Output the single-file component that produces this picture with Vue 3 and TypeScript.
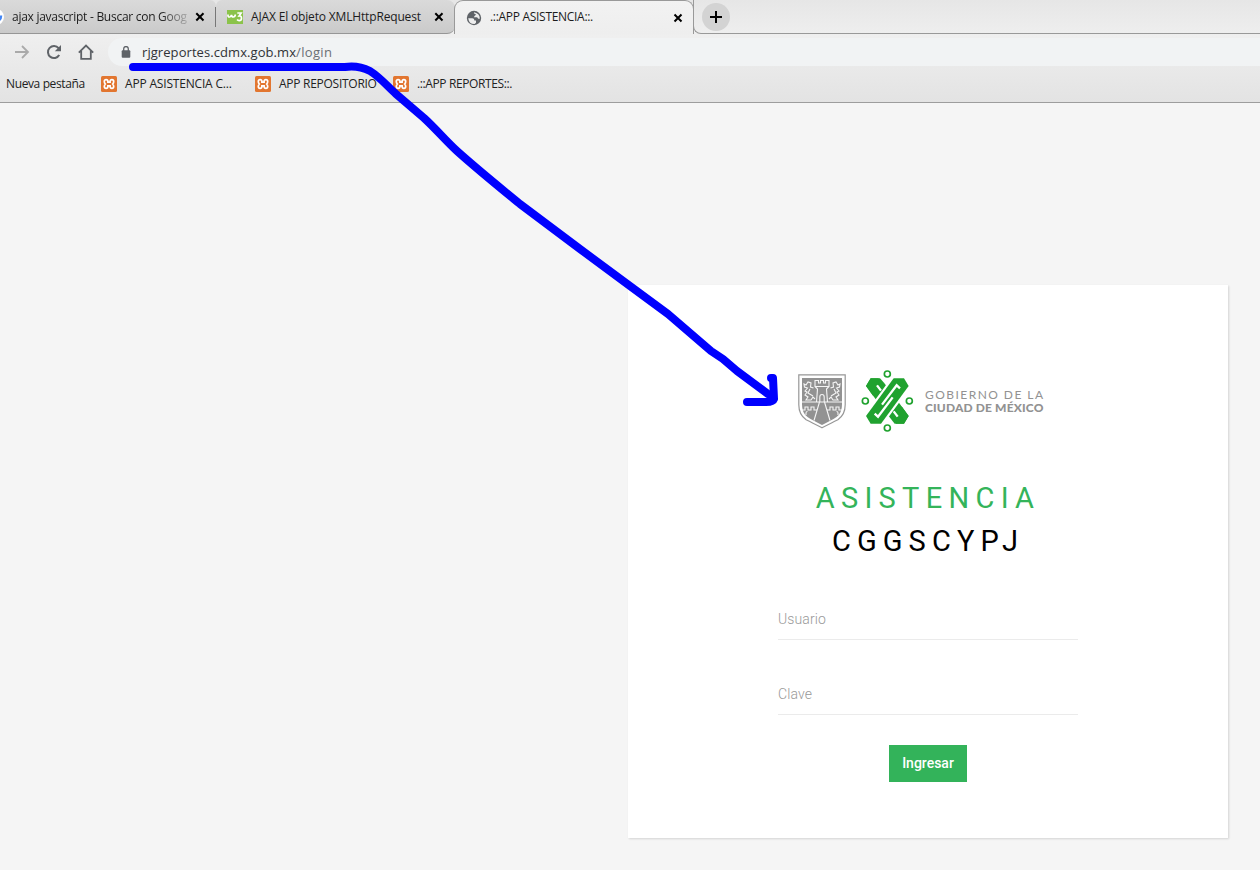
<script setup lang="ts">
interface Bookmark {
  label: string
  icon: boolean
  cls: string
}

const bookmarks: Bookmark[] = [
  { label: 'Nueva pestaña', icon: false, cls: 'bm-new' },
  { label: 'APP ASISTENCIA C...', icon: true, cls: 'bm-asis' },
  { label: 'APP REPOSITORIO', icon: true, cls: 'bm-repo' },
  { label: '.::APP REPORTES::.', icon: true, cls: 'bm-repr' },
]
</script>

<template>
  <div class="screen">
    <header class="browser">
      <div class="tabs">
        <div class="tab tab-first">
          <svg class="google" width="4" height="16" viewBox="0 0 4 16"><circle cx="-4" cy="8" r="8" fill="#fff" /><path d="M0 6.500h2.300a7 7 0 0 1-2.300 5.500z" fill="#4285f4" /></svg>
          <span class="title t1">ajax javascript - Buscar con Goog</span>
          <svg class="close" width="10" height="10" viewBox="0 0 10 10"><path d="M1.300 1.300l7.200 7.200M8.500 1.300L1.300 8.500" /></svg>
        </div>
        <div class="tab tab-second">
          <svg class="fav" width="16" height="16" viewBox="0 0 16 16">
            <rect y="1" width="16" height="14" fill="#8bc34a" />
            <path d="M1 5.500v1q0 2 2 1.300 1.300-.5 1.500-2 .2 2.200 1.800 2.200 1.800 0 2-2.500M10.300 4h3.800l-2 3q2.400-.2 2.400 2.200 0 2.400-2.400 2.400-1.300 0-2-1" fill="none" stroke="#fff" stroke-width="1.700" />
          </svg>
          <span class="title t2">AJAX El objeto XMLHttpRequest</span>
          <svg class="close" width="10" height="10" viewBox="0 0 10 10"><path d="M1.300 1.300l7.200 7.200M8.500 1.300L1.300 8.500" /></svg>
        </div>
        <div class="tab tab-active">
          <svg class="fav" width="16" height="16" viewBox="0 0 16 16">
            <circle cx="8" cy="8" r="7.200" fill="#5f6368" />
            <path d="M2.200 8.200h4.100q2 0 2 1.800v.6h1.700v2.200l-1.400 1.300q-5.500.2-6.400-5.900zM8.200 2.200q-1 1.600.8 1.600l1 .9-1.500 1.200-.6 1.400h3.200l1.200 1.500h1.500Q14 3.500 8.200 2.200z" fill="#eee" />
          </svg>
          <span class="title t3">.::APP ASISTENCIA::.</span>
          <svg class="close" width="10" height="10" viewBox="0 0 10 10"><path d="M1.500 1.500l7 7M8.500 1.500l-7 7" /></svg>
        </div>
        <div class="strip-end">
          <div class="plus">
            <svg width="12" height="12" viewBox="0 0 12 12"><path d="M6 0v12M0 6h12" stroke="#000" stroke-width="2" /></svg>
          </div>
        </div>
      </div>
      <div class="toolbar">
        <svg class="nav forward" width="16" height="16" viewBox="0 0 16 16"><path d="M1 8h13M8 2l6 6-6 6" fill="none" stroke="#aaa" stroke-width="1.800" /></svg>
        <svg class="nav reload" width="16" height="16" viewBox="0 0 16 16"><path d="M13.200 11A6 6 0 1 1 12.600 4.200L14 5.800" fill="none" stroke="#5f6368" stroke-width="2" /><path d="M15 1v6.200H8.800z" fill="#5f6368" /></svg>
        <svg class="nav home" width="16" height="16" viewBox="0 0 16 16"><path d="M.8 8.600L8 1.500l7.200 7.100M3.200 7v7.800h9.600V7" fill="none" stroke="#5f6368" stroke-width="1.800" /></svg>
        <div class="address">
          <svg width="10" height="12" viewBox="0 0 10 12"><rect x=".7" y="4.300" width="8.600" height="7.500" rx="1" fill="#5f6368" /><path d="M2.700 5V2.800a2.300 2.300 0 0 1 4.600 0V5" fill="none" stroke="#5f6368" stroke-width="1.300" /></svg>
          <span class="url">rjgreportes.cdmx.gob.mx<i>/login</i></span>
        </div>
      </div>
      <nav class="bookmarks">
        <div v-for="b in bookmarks" :key="b.label" class="bookmark" :class="b.cls">
          <svg v-if="b.icon" width="16" height="16" viewBox="0 0 16 16">
            <rect width="16" height="16" rx="1.500" fill="#e27630" />
            <path d="M8 6.200H6.900V5.400Q6.900 3.700 5.100 3.700T3.300 5.400Q3.300 7 4.300 8 3.300 9 3.300 10.600 3.300 12.300 5.100 12.300T6.900 10.600V9.800H9.100V10.600Q9.100 12.300 10.900 12.300T12.700 10.600Q12.700 9 11.700 8 12.700 7 12.700 5.400 12.700 3.700 10.900 3.700T9.100 5.400V6.200z" fill="none" stroke="#fff" stroke-width="1.700" />
          </svg>
          <span>{{ b.label }}</span>
        </div>
      </nav>
    </header>

    <main class="page">
      <section class="card">
        <div class="brand">
          <svg class="shield" width="48" height="55" viewBox="0 0 48 55">
            <path d="M.8.8h46.400v30q0 10-7.300 14.900Q34 48.500 24 53.800 14 48.500 8.100 45.700.8 40.800.8 30.800z" fill="#fff" stroke="#979797" stroke-width="1.200" />
            <path d="M4 4h40v26.500q0 8.500-5.500 12.500Q34 46 24 51 14 46 9.500 43 4 39 4 30.500z" fill="#929292" />
            <g fill="none" stroke="#f5f5f5" stroke-width="1.100">
              <path d="M4 28h40M18.500 28l1-13-2.500-2.500V6.500h3.500V9h2V6.500h3V9h2V6.500H31v6L28.500 15l1 13M17 12.500h14M21.800 28v-5q0-2.500 2.200-2.500t2.200 2.500v5M21.500 28L16 46.500M26.500 28L32 46.500" />
              <path d="M4 36h3v-3h3v3h3v-3h3v3h3M8 41v-2q0-1.500 1.500-1.500M44 36h-3v-3h-3v3h-3v-3h-3v3h-3M40 41v-2q0-1.500-1.500-1.500" />
              <path d="M15.500 14l-3-1 .5-4-3-1-2 3-2-1 .5 3 3 1-2.500 3 2 1-2 3 3 2-2 3h5l2-3 2 2M12 15l-2 4 5 3M32.500 14l3-1-.5-4 3-1 2 3 2-1-.5 3-3 1 2.500 3-2 1 2 3-3 2 2 3h-5l-2-3-2 2M36 15l2 4-5 3" />
            </g>
          </svg>
          <svg class="emblem" width="60" height="70" viewBox="0 0 180 210">
            <g fill="none" stroke="#20a22f" stroke-width="5">
              <circle cx="88" cy="24" r="9" />
              <circle cx="88" cy="186" r="9" />
              <circle cx="22" cy="105" r="9" />
              <circle cx="154" cy="105" r="9" />
            </g>
            <path d="M66 37H38L24 60 57 105 110 173H138L152 150 119 105 78 50z" fill="#20a22f" />
            <path d="M107 37H138L152 60 119 105 69 173H38L24 150 57 105z" fill="#20a22f" stroke="#fff" stroke-width="13" stroke-linejoin="round" />
            <path d="M107 37H138L152 60 119 105 69 173H38L24 150 57 105z" fill="#20a22f" />
            <path d="M62 37H38L24 60 45 89 61 66zM114 173H138L152 150 131 121 115 144z" fill="#20a22f" />
            <g fill="none" stroke="#fff" stroke-width="7">
              <path d="M69 74L57 58M107 136L119 152" />
              <path d="M126 67L116 58 72 116M50 143L60 152 104 94" />
            </g>
          </svg>
          <div class="wordmark">
            <span class="gov">GOBIERNO DE LA</span>
            <span class="city">CIUDAD DE MÉXICO</span>
          </div>
        </div>
        <h1><span class="green">ASISTENCIA</span><span class="black">CGGSCYPJ</span></h1>
        <form @submit.prevent>
          <input type="text" placeholder="Usuario" />
          <input type="password" placeholder="Clave" />
          <button type="submit">Ingresar</button>
        </form>
      </section>
    </main>

    <svg class="ink" width="1260" height="870" viewBox="0 0 1260 870">
      <path d="M133 67H345Q358 65 370 71C381 78 387 86 396 94L424 118C436 129 446 141 457 151C477 169 498 186 520 204L580 249 630 286 668 314 711 351 723 359 737 371 768 394" />
      <path d="M771 378H773L774 399Q773 402 766 402L747 402" />
    </svg>
  </div>
</template>

<style>
body {
  margin: 0;
  overflow: hidden;
}
</style>

<style scoped>
.screen {
  position: relative;
  width: 1260px;
  height: 870px;
  overflow: hidden;
  display: flex;
  flex-direction: column;
  background: #f5f5f5;
  font-family: "Open Sans", "Noto Sans", sans-serif;
}

.browser {
  box-sizing: border-box;
  height: 103px;
  border-bottom: 1px solid #9d9d9d;
  background: linear-gradient(#e6e6e6, #efefef 36px, #e3e3e3);
}

.tabs {
  display: flex;
  height: 34px;
}

.tab {
  box-sizing: border-box;
  display: flex;
  align-items: center;
  height: 34px;
  font-size: 12px;
  color: #1c1c1c;
  white-space: nowrap;
}

.tab-first,
.tab-second {
  background: linear-gradient(#dadada, #cacaca);
  border-bottom: 1px solid #969696;
}

.tab-first {
  width: 216px;
  border-radius: 0 6px 0 0;
}

.tab-first::after {
  content: "";
  margin-left: 10px;
  width: 1px;
  height: 20px;
  background: #777;
}

.tab-second {
  width: 239px;
  padding-left: 11px;
  border-radius: 6px 8px 8px 0;
}

.tab-active {
  width: 240px;
  margin-left: -1px;
  padding-left: 11px;
  border: 1px solid #999;
  border-bottom: 0;
  border-radius: 9px 9px 0 0;
  background: linear-gradient(#f2f2f2, #eee);
}

.strip-end {
  flex: 1;
  box-sizing: border-box;
  margin-left: -1px;
  padding: 3px 0 0 8px;
  border-bottom: 1px solid #999;
  border-left: 1px solid #999;
  border-radius: 0 0 0 8px;
}

.plus {
  display: flex;
  align-items: center;
  justify-content: center;
  width: 28px;
  height: 28px;
  border-radius: 50%;
  background: #d3d3d3;
}

.t1 {
  width: 179px;
  margin-left: 8px;
  letter-spacing: -0.27px;
  mask-image: linear-gradient(to right, #000 148px, transparent 182px);
}

.t2 {
  width: 174px;
  margin-left: 8px;
  letter-spacing: -0.16px;
}

.t3 {
  width: 175px;
  margin-left: 8px;
  letter-spacing: -0.3px;
}

.tab-active .title {
  margin-top: -2px;
}

.close {
  margin-left: 9px;
  fill: none;
  stroke: #000;
  stroke-width: 2;
}

.tab-first .close {
  margin-left: 4px;
}

.tab-active .close {
  margin-left: 8px;
}

.toolbar {
  display: flex;
  height: 32px;
  padding-left: 14px;
}

.nav {
  margin: 10px 16px 0 0;
}

.address {
  flex: 1;
  display: flex;
  align-items: center;
  box-sizing: border-box;
  height: 28px;
  margin: 4px 0 0 -2px;
  padding-left: 13px;
  border-radius: 14px 0 0 14px;
  background: #f1f3f4;
}

.url {
  margin-left: 11px;
  font-size: 13px;
  letter-spacing: 0.07px;
  color: #303236;
}

.url i {
  font-style: normal;
  letter-spacing: 0.35px;
  color: #6b6f74;
}

.bookmarks {
  display: flex;
  align-items: center;
  height: 36px;
  padding-left: 6px;
  font-size: 12px;
  color: #222;
}

.bookmark {
  display: flex;
  align-items: center;
  gap: 8px;
  white-space: nowrap;
}

.bookmark span {
  margin-top: -1px;
}

.bm-new {
  width: 95px;
  letter-spacing: -0.38px;
}

.bm-asis {
  width: 154px;
  letter-spacing: -0.18px;
}

.bm-repo {
  width: 138px;
  letter-spacing: -0.27px;
}

.bm-repr {
  letter-spacing: -0.38px;
}

.page {
  flex: 1;
  padding: 182px 0 0 628px;
}

.card {
  box-sizing: border-box;
  width: 600px;
  height: 553px;
  padding: 84px 150px 0;
  background: #fff;
  box-shadow: 1px 1px 2px rgba(0, 0, 0, 0.14);
  font-family: Roboto, "Open Sans", sans-serif;
}

.brand {
  display: flex;
  align-items: center;
  height: 64px;
  padding-left: 20px;
}

.emblem {
  margin: 0 -3px 0 12px;
}

.wordmark {
  display: flex;
  flex-direction: column;
  margin-left: 10px;
  font-family: Lato, sans-serif;
  font-size: 12px;
  line-height: 13px;
  color: #929292;
  white-space: nowrap;
}

.gov {
  letter-spacing: 1.45px;
}

.city {
  font-weight: 900;
  letter-spacing: 0.15px;
}

h1 {
  display: flex;
  flex-direction: column;
  align-items: center;
  margin: 44px 0 0;
  font-size: 29px;
  font-weight: 400;
  line-height: 43px;
}

.green {
  color: #34b45a;
  letter-spacing: 6.3px;
}

.black {
  color: #000;
  letter-spacing: 6.1px;
}

form {
  display: flex;
  flex-direction: column;
  align-items: center;
  margin-top: 36px;
}

input {
  box-sizing: border-box;
  width: 300px;
  height: 41px;
  margin-bottom: 34px;
  padding: 0;
  border: 0;
  border-bottom: 1px solid #ebebeb;
  background: transparent;
  font: 300 14px/20px Roboto, sans-serif;
  letter-spacing: 0.1px;
}

input::placeholder {
  color: #999;
  opacity: 1;
}

button {
  width: 78px;
  height: 37px;
  margin-top: -4px;
  padding: 0 0 2px;
  border: 0;
  background: #33b35a;
  color: #fff;
  font: 500 14px/20px Roboto, sans-serif;
}

.ink {
  position: absolute;
  inset: 0;
  pointer-events: none;
  fill: none;
  stroke: #0000fe;
  stroke-width: 8;
  stroke-linecap: round;
  stroke-linejoin: round;
}
</style>
